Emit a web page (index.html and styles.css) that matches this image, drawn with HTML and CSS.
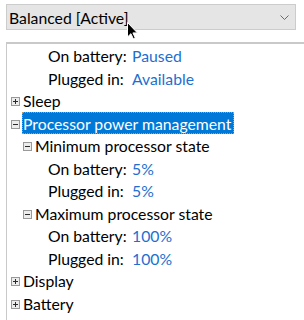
FILE: index.html
```html
<!DOCTYPE html>
<html>
<head>
<meta charset="utf-8">
<link rel="stylesheet" href="styles.css">
</head>
<body>
<div class="combo">
  <span class="combo-text">Balanced [Active]</span>
  <svg class="chev" width="9" height="5" viewBox="0 0 9 5"><polyline points="0.5,0.5 4.5,4.5 8.5,0.5" fill="none" stroke="#6a6a6a" stroke-width="1"/></svg>
</div>
<div class="tree">
  <div class="row l2"><span class="sp"></span><span class="item"><span class="lbl">On battery:</span><span class="val">Paused</span></span></div>
  <div class="row l2"><span class="sp"></span><span class="item"><span class="lbl">Plugged in:</span><span class="val">Available</span></span></div>
  <div class="row l0"><svg class="exp" viewBox="0 0 9 9"><rect x="0.5" y="0.5" width="8" height="8" class="exp-box"/><path d="M2 4.5H7M4.5 2V7" class="exp-sign"/></svg><span class="item">Sleep</span></div>
  <div class="row l0"><svg class="exp" viewBox="0 0 9 9"><rect x="0.5" y="0.5" width="8" height="8" class="exp-box"/><path d="M2 4.5H7" class="exp-sign"/></svg><span class="item selected">Processor power management</span></div>
  <div class="row l1"><svg class="exp" viewBox="0 0 9 9"><rect x="0.5" y="0.5" width="8" height="8" class="exp-box"/><path d="M2 4.5H7" class="exp-sign"/></svg><span class="item">Minimum processor state</span></div>
  <div class="row l2"><span class="sp"></span><span class="item"><span class="lbl">On battery:</span><span class="val">5%</span></span></div>
  <div class="row l2"><span class="sp"></span><span class="item"><span class="lbl">Plugged in:</span><span class="val">5%</span></span></div>
  <div class="row l1"><svg class="exp" viewBox="0 0 9 9"><rect x="0.5" y="0.5" width="8" height="8" class="exp-box"/><path d="M2 4.5H7" class="exp-sign"/></svg><span class="item">Maximum processor state</span></div>
  <div class="row l2"><span class="sp"></span><span class="item"><span class="lbl">On battery:</span><span class="val">100%</span></span></div>
  <div class="row l2"><span class="sp"></span><span class="item"><span class="lbl">Plugged in:</span><span class="val">100%</span></span></div>
  <div class="row l0"><svg class="exp" viewBox="0 0 9 9"><rect x="0.5" y="0.5" width="8" height="8" class="exp-box"/><path d="M2 4.5H7M4.5 2V7" class="exp-sign"/></svg><span class="item">Display</span></div>
  <div class="row l0"><svg class="exp" viewBox="0 0 9 9"><rect x="0.5" y="0.5" width="8" height="8" class="exp-box"/><path d="M2 4.5H7M4.5 2V7" class="exp-sign"/></svg><span class="item">Battery</span></div>
</div>
<svg class="cursor" width="12" height="18" viewBox="0 0 12 18"><path d="M0.5 0.5V15L3.9 11.7L6.3 16.8L8.3 15.9L5.9 10.9H10.4Z" fill="#000" stroke="#fff" stroke-width="1" stroke-linejoin="round"/></svg>
</body>
</html>
```
FILE: styles.css
```css
html, body {
  margin: 0;
  padding: 0;
  background: #ffffff;
}
body {
  width: 304px;
  height: 320px;
  overflow: hidden;
  position: relative;
  font-family: "Lato", "Open Sans", sans-serif;
  font-size: 15.75px;
  color: #000000;
}
.combo {
  margin: 4px 8px 0 6px;
  height: 26px;
  box-sizing: border-box;
  border: 1px solid #cccccc;
  background: #e5e5e5;
  display: flex;
  align-items: center;
  justify-content: space-between;
  padding: 0 6px 0 2px;
}
.combo-text {
  line-height: 22px;
  padding-top: 1px;
}
.chev {
  display: block;
}
.tree {
  margin: 12px 0 0 6px;
  border-top: 2px solid #c9c9c9;
  border-left: 1px solid #c9c9c9;
  height: 276px;
  overflow: hidden;
}
.row {
  display: flex;
  align-items: flex-start;
  height: 22.5px;
  white-space: nowrap;
}
.l0 { padding-left: 4px; }
.l1 { padding-left: 16px; }
.l2 { padding-left: 29px; }
.exp, .sp {
  flex: none;
  width: 9px;
  height: 9px;
  margin-top: 8px;
  margin-right: 2px;
  display: block;
}
.exp-box {
  fill: #ececec;
  stroke: #999999;
  stroke-width: 1;
}
.exp-sign {
  stroke: #2a2a2a;
  stroke-width: 1;
  fill: none;
}
.item {
  display: inline-block;
  line-height: 20.5px;
  box-sizing: border-box;
  height: 22.5px;
  border: 1px solid transparent;
  padding: 1px 2px 0 0;
}
.selected {
  background: #0078d7;
  color: #ffffff;
  border: 1px dotted #c09a5e;
}
.lbl {
  display: inline-block;
  width: 84px;
}
.val {
  color: #1d6fd1;
}
.cursor {
  position: absolute;
  left: 127px;
  top: 22px;
}
```
